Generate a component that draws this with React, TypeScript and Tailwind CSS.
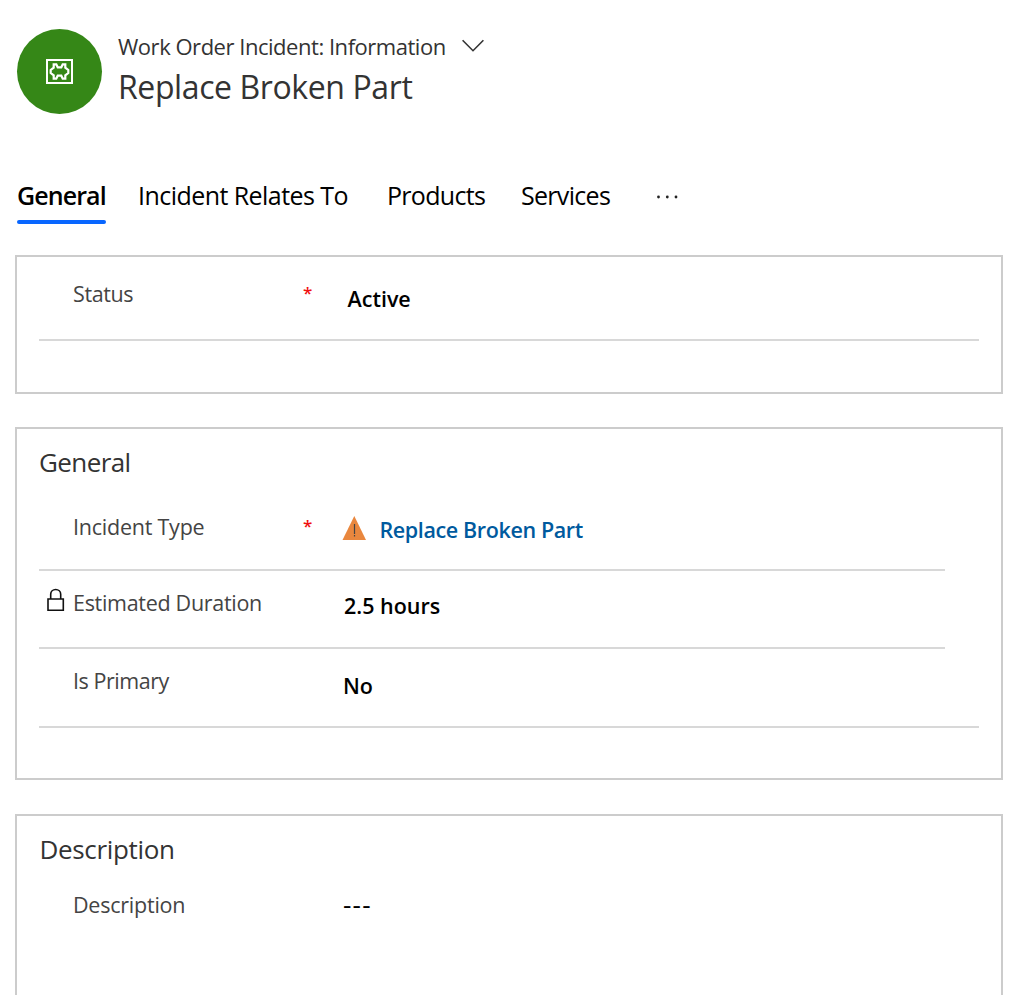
import type { ReactNode } from "react";

function Card({ children, className }: { children?: ReactNode; className: string }) {
  return <section className={`border-2 border-[#cccccc] pl-[22px] pr-[22px] ${className}`}>{children}</section>;
}

type RowProps = {
  label: string;
  labelClass: string;
  className: string;
  labelPad: string;
  valuePad: string;
  required?: boolean;
  locked?: boolean;
  children: ReactNode;
};

function LockIcon() {
  return (
    <svg width="18" height="24" viewBox="0 0 18 24" fill="none" stroke="#111" strokeWidth="1.6">
      <path d="M1 11H16.300V22.200H1Z" />
      <path d="M3.700 11V6.300A5 4.800 0 0 1 13.700 6.300V11" />
    </svg>
  );
}

function Row({ label, labelClass, className, labelPad, valuePad, required, locked, children }: RowProps) {
  return (
    <div className={`flex items-start ${className}`}>
      <div className="flex w-[34px] shrink-0 pl-[8px] pt-[17px]">{locked && <LockIcon />}</div>
      <div className={`w-[230px] shrink-0 text-[21.5px] leading-[28px] text-[#444444] ${labelPad}`}>
        <span className={`whitespace-nowrap ${labelClass}`}>{label}</span>
      </div>
      <div className={`w-[40px] shrink-0 text-[17px] font-semibold leading-[25px] text-[#f01010] ${labelPad}`}>{required && "*"}</div>
      <div className={`text-[21.5px] leading-[28px] whitespace-nowrap text-black ${valuePad}`}>{children}</div>
    </div>
  );
}

export default function App() {
  return (
    <div className="h-[995px] w-[1022px] overflow-hidden bg-white font-['Open_Sans','Noto_Sans',sans-serif]">
      <header className="flex h-[179px] pl-[17px] pt-[29px]">
        <div className="flex size-[85px] shrink-0 items-center justify-center rounded-full bg-[#358717]">
          <svg width="27" height="25" viewBox="0 0 27 25" fill="none" stroke="#fff">
            <rect x="1" y="1" width="25" height="23" strokeWidth="2" />
            <path
              strokeWidth="2.200"
              d="M7.700 5.300H10.300L11.700 8.300H15.300L16.700 5.300H19.300V8.700L22.300 11V14L19.300 16.300V19.700H16.700L15.300 16.700H11.700L10.300 19.700H7.700V16.300L4.700 14V11L7.700 8.700Z"
            />
          </svg>
        </div>
        <div className="pl-[16px] pt-[4px] text-[#333333]">
          <div className="flex h-[33px] items-start">
            <span className="w-[344px] text-[22px] leading-[26px] tracking-[-0.47px] whitespace-nowrap">Work Order Incident: Information</span>
            <svg className="mt-[6px]" width="22" height="14" viewBox="0 0 22 14" fill="none" stroke="#333" strokeWidth="1.6">
              <path d="M0.600 1.300L11 11.700L21.400 1.300" />
            </svg>
          </div>
          <h1 className="text-[32px] leading-[42px] tracking-[-0.4px] whitespace-nowrap">Replace Broken Part</h1>
        </div>
      </header>

      <nav className="flex h-[76px] items-start pl-[17px] text-[25px] leading-[32px] whitespace-nowrap text-black">
        <div className="h-[45px] w-[121px]">
          <div className="h-[41px] w-[89px] font-semibold tracking-[-0.9px]">General</div>
          <div className="h-[4px] w-[89px] rounded-[2px] bg-[#0866ff]" />
        </div>
        <span className="w-[249px] tracking-[-0.55px]">Incident Relates To</span>
        <span className="w-[134px] tracking-[-0.7px]">Products</span>
        <span className="w-[135px] tracking-[-0.7px]">Services</span>
        <svg className="mt-[15px]" width="24" height="6" viewBox="0 0 24 6" fill="#222">
          <circle cx="2.500" cy="3" r="1.400" />
          <circle cx="11.300" cy="3" r="1.400" />
          <circle cx="20" cy="3" r="1.400" />
        </svg>
      </nav>

      <main className="flex flex-col pl-[15px]">
        <Card className="h-[139px] w-[988px]">
          <Row label="Status" labelClass="tracking-[-0.4px]" className="h-[84px] border-b-2 border-[#d8d8d8]" labelPad="pt-[23px]" valuePad="pt-[28px] pl-[4.5px] font-semibold" required>
            Active
          </Row>
        </Card>

        <Card className="mt-[33px] h-[353px] w-[988px]">
          <h2 className="h-[63px] pt-[17px] text-[26px] leading-[32px] tracking-[-0.6px] text-[#333333]">General</h2>
          <Row label="Incident Type" labelClass="tracking-[-0.23px]" className="h-[79px] w-[906px] border-b-2 border-[#d8d8d8]" labelPad="pt-[21px]" valuePad="pt-[24px] font-semibold" required>
            <span className="-ml-px flex tracking-[-0.38px] text-[#005a9e]">
              <svg className="mr-[13.5px]" width="24" height="24" viewBox="0 0 24 24">
                <path d="M12.300 0L24 24H0.500Z" fill="#e9873e" />
                <path d="M12.500 8V18M12.500 19V20.500" stroke="#444" strokeWidth="1.200" />
              </svg>
              Replace Broken Part
            </span>
          </Row>
          <Row label="Estimated Duration" labelClass="tracking-[-0.3px]" className="h-[78px] w-[906px] border-b-2 border-[#d8d8d8]" labelPad="pt-[18px]" valuePad="pt-[21px] pl-[1px] font-semibold" locked>
            2.5 hours
          </Row>
          <Row label="Is Primary" labelClass="tracking-[-0.45px]" className="h-[79px] border-b-2 border-[#d8d8d8]" labelPad="pt-[18px]" valuePad="pt-[23px] font-semibold">
            No
          </Row>
        </Card>

        <Card className="mt-[34px] h-[260px] w-[988px]">
          <h2 className="h-[57px] pl-[0.5px] pt-[17px] text-[26px] leading-[32px] tracking-[-0.33px] text-[#333333]">Description</h2>
          <Row label="Description" labelClass="tracking-[-0.23px]" className="h-[79px]" labelPad="pt-[18px]" valuePad="pt-[17px]">
            <span className="text-[26px] tracking-[1.2px]">---</span>
          </Row>
        </Card>
      </main>
    </div>
  );
}
